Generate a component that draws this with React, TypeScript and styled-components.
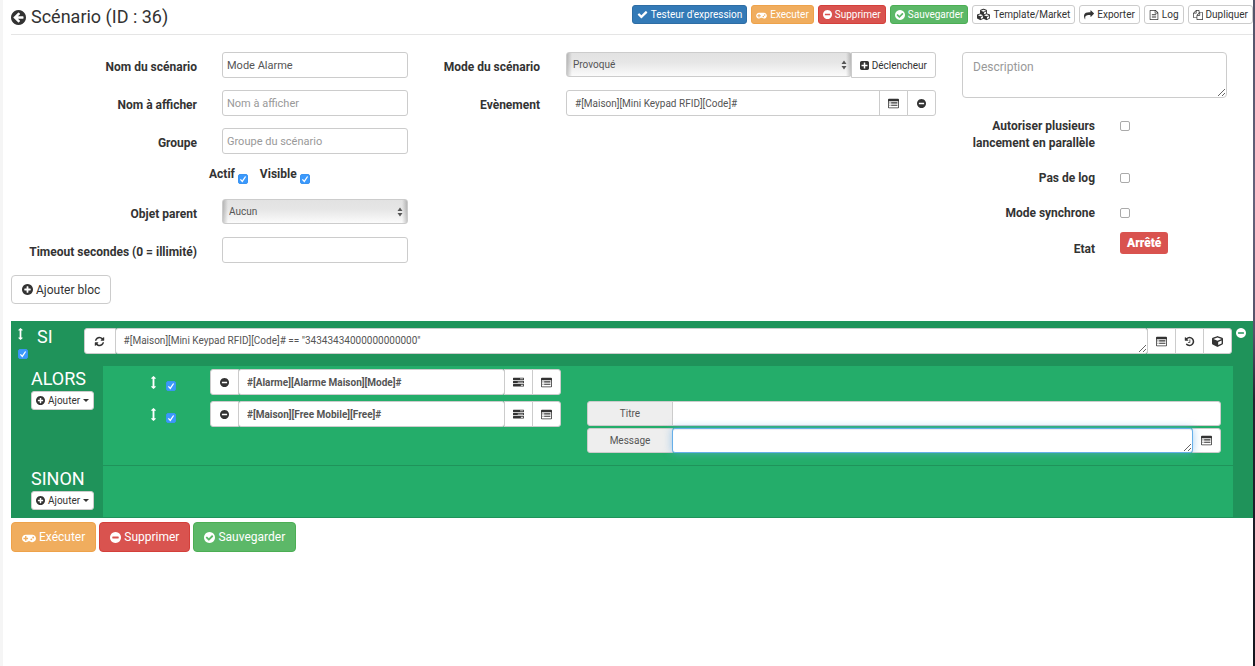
import React from "react";
import styled, { createGlobalStyle, css } from "styled-components";
import { FaCube, FaCubes } from "react-icons/fa";

const GlobalStyle = createGlobalStyle`
  *, *::before, *::after { box-sizing: border-box; }
  body {
    margin: 0;
    background: #fff;
    color: #333;
    font-family: Roboto, "Liberation Sans", sans-serif;
    font-size: 12px;
    line-height: 17px;
  }
  button, input, select, textarea { font-family: inherit; margin: 0; }
`;

/* ---------- icons ---------- */

const DISC =
  "M1664 896q0 209-103 385.5t-279.5 279.5-385.5 103-385.5-103-279.5-279.5-103-385.5 103-385.5 279.5-279.5 385.5-103 385.5 103 279.5 279.5 103 385.5z";

const PATHS = {
  back:
    "M1408 960v-128q0-26-19-45t-45-19h-502l189-189q19-19 19-45t-19-45l-91-91q-18-18-45-18t-45 18l-362 362-91 91q-18 18-18 45t18 45l91 91 362 362q18 18 45 18t45-18l91-91q18-18 18-45t-18-45l-189-189h502q26 0 45-19t19-45z" + DISC,
  check:
    "M1671 566q0 40-28 68l-724 724-136 136q-28 28-68 28t-68-28l-136-136-362-362q-28-28-28-68t28-68l136-136q28-28 68-28t68 28l294 295 656-657q28-28 68-28t68 28l136 136q28 28 28 68z",
  minus:
    "M1344 960v-128q0-26-19-45t-45-19h-768q-26 0-45 19t-19 45v128q0 26 19 45t45 19h768q26 0 45-19t19-45z" + DISC,
  plus:
    "M1344 960v-128q0-26-19-45t-45-19h-256v-256q0-26-19-45t-45-19h-128q-26 0-45 19t-19 45v256h-256q-26 0-45 19t-19 45v128q0 26 19 45t45 19h256v256q0 26 19 45t45 19h128q26 0 45-19t19-45v-256h256q26 0 45-19t19-45z" + DISC,
  ok:
    "M1412 734q0-28-18-46l-91-90q-19-19-45-19t-45 19l-408 407-226-226q-19-19-45-19t-45 19l-91 90q-18 18-18 46 0 27 18 45l362 362q19 19 45 19 27 0 46-19l543-543q18-18 18-45z" + DISC,
  plusSquare:
    "M1408 960v-128q0-26-19-45t-45-19h-320v-320q0-26-19-45t-45-19h-128q-26 0-45 19t-19 45v320h-320q-26 0-45 19t-19 45v128q0 26 19 45t45 19h320v320q0 26 19 45t45 19h128q26 0 45-19t19-45v-320h320q26 0 45-19t19-45zm256-544v960q0 119-84.5 203.5t-203.5 84.5h-960q-119 0-203.5-84.5t-84.5-203.5v-960q0-119 84.5-203.5t203.5-84.5h960q119 0 203.5 84.5t84.5 203.5z",
  gamepad:
    "M832 1088v-128q0-14-9-23t-23-9h-192v-192q0-14-9-23t-23-9h-128q-14 0-23 9t-9 23v192h-192q-14 0-23 9t-9 23v128q0 14 9 23t23 9h192v192q0 14 9 23t23 9h128q14 0 23-9t9-23v-192h192q14 0 23-9t9-23zm576 64q0-53-37.5-90.5t-90.5-37.5-90.5 37.5-37.5 90.5 37.5 90.5 90.5 37.5 90.5-37.5 37.5-90.5zm256-256q0-53-37.5-90.5t-90.5-37.5-90.5 37.5-37.5 90.5 37.5 90.5 90.5 37.5 90.5-37.5 37.5-90.5zm256 128q0 212-150 362t-362 150q-192 0-338-128h-220q-146 128-338 128-212 0-362-150t-150-362 150-362 362-150h896q212 0 362 150t150 362z",
  share:
    "M1792 640q0 26-19 45l-512 512q-19 19-45 19t-45-19-19-45v-256h-224q-98 0-175.5 6t-154 21.5-133 42.5-105.5 69.5-80 101-48.5 138.5-17.5 181q0 55 5 123 0 6 2.5 23.5t2.5 26.5q0 15-8.5 25t-23.5 10q-16 0-28-17-7-9-13-22t-13.5-30-10.5-24q-127-285-127-451 0-199 53-333 162-403 875-403h224v-256q0-26 19-45t45-19 45 19l512 512q19 19 19 45z",
  refresh:
    "M1639 1056q0 5-1 7-64 268-268 434.5t-478 166.5q-146 0-282.5-55t-243.5-157l-129 129q-19 19-45 19t-45-19-19-45v-448q0-26 19-45t45-19h448q26 0 45 19t19 45-19 45l-137 137q71 66 161 102t187 36q134 0 250-65t186-179q11-17 53-117 8-23 30-23h192q13 0 22.5 9.5t9.5 22.5zm25-800v448q0 26-19 45t-45 19h-448q-26 0-45-19t-19-45 19-45l138-138q-148-137-349-137-134 0-250 65t-186 179q-11 17-53 117-8 23-30 23h-199q-13 0-22.5-9.5t-9.5-22.5v-7q65-268 270-434.5t480-166.5q146 0 284 55.5t245 156.5l130-129q19-19 45-19t45 19 19 45z",
  history:
    "M1664 896q0 156-61 298t-164 245-245 164-298 61q-172 0-327-72.5t-264-204.5q-7-10-6.5-22.5t8.5-20.5l137-138q10-9 25-9 16 2 23 12 73 95 179 147t225 52q104 0 198.5-40.5t163.5-109.5 109.5-163.5 40.5-198.5-40.5-198.5-109.5-163.5-163.5-109.5-198.5-40.5q-98 0-188 35.5t-160 101.5l137 138q31 30 14 69-17 40-59 40h-448q-26 0-45-19t-19-45v-448q0-42 40-59 39-17 69 14l130 129q107-101 244.5-156.5t284.5-55.5q156 0 298 61t245 164 164 245 61 298zm-640-288v448q0 14-9 23t-23 9h-320q-14 0-23-9t-9-23v-64q0-14 9-23t23-9h224v-352q0-14 9-23t23-9h64q14 0 23 9t9 23z",
  move:
    "M1088 320q0 26-19 45t-45 19h-128v1024h128q26 0 45 19t19 45-19 45l-256 256q-19 19-45 19t-45-19l-256-256q-19-19-19-45t19-45 45-19h128v-1024h-128q-26 0-45-19t-19-45 19-45l256-256q19-19 45-19t45 19l256 256q19 19 19 45z",
  listAlt:
    "M160 128h1472q160 0 160 160v1216q0 160-160 160h-1472q-160 0-160-160v-1216q0-160 160-160zM128 512v992q0 32 32 32h1472q32 0 32-32v-992zM256 640h128v128h-128zM512 640h1024v128h-1024zM256 896h128v128h-128zM512 896h1024v128h-1024zM256 1152h128v128h-128zM512 1152h1024v128h-1024z",
  tasks:
    "M64 128h1664q64 0 64 64v256q0 64-64 64h-1664q-64 0-64-64v-256q0-64 64-64zM1152 256v128h512v-128zM64 640h1664q64 0 64 64v256q0 64-64 64h-1664q-64 0-64-64v-256q0-64 64-64zM768 768v128h896v-128zM64 1152h1664q64 0 64 64v256q0 64-64 64h-1664q-64 0-64-64v-256q0-64 64-64zM1280 1280v128h384v-128z",
  file:
    "M1596 380q28 28 48 76t20 88v1152q0 40-28 68t-68 28h-1344q-40 0-68-28t-28-68v-1600q0-40 28-68t68-28h896q40 0 88 20t76 48zm-444-244v376h376q-10-29-22-41l-313-313q-12-12-41-22zm384 1528v-1024h-416q-40 0-68-28t-28-68v-416h-768v1536h1280zM512 768h768v128h-768zM512 1024h768v128h-768zM512 1280h768v128h-768z",
  files:
    "M1696 384q40 0 68 28t28 68v1216q0 40-28 68t-68 28h-960q-40 0-68-28t-28-68v-288h-544q-40 0-68-28t-28-68v-672q0-40 20-88t48-76l408-408q28-28 76-48t88-20h416q40 0 68 28t28 68v328q68-40 128-40h416zm-544 213l-299 299h299v-299zm-640-384l-299 299h299v-299zm196 647l316-316v-416h-384v416q0 40-28 68t-68 28h-416v640h512v-256q0-40 20-88t48-76zm956 804v-1152h-384v416q0 40-28 68t-68 28h-416v640h896z",
};

type IconName = keyof typeof PATHS;

const TIGHT = "128 128 1536 1536";
const VIEW: Partial<Record<IconName, string>> = {
  back: TIGHT,
  minus: TIGHT,
  plus: TIGHT,
  ok: TIGHT,
  plusSquare: TIGHT,
  gamepad: "0 0 1920 1792",
  move: "448 0 640 1792",
};

const Glyph = styled.svg`
  flex: none;
  display: block;
  fill: currentColor;
  fill-rule: evenodd;
`;

function Icon({ name, size = 11 }: { name: IconName; size?: number }) {
  const width = name === "gamepad" ? size + 1 : name === "move" ? 5 : size;
  return (
    <Glyph width={width} height={size} viewBox={VIEW[name] ?? "0 0 1792 1792"} aria-hidden="true">
      <path d={PATHS[name]} />
    </Glyph>
  );
}

/* ---------- controls ---------- */

type Tone = "plain" | "primary" | "warning" | "danger" | "success";

const TONES: Record<Tone, [string, string, string]> = {
  plain: ["#fff", "#ccc", "#333"],
  primary: ["#337ab7", "#2e6da4", "#fff"],
  warning: ["#f0ad5e", "#eea24a", "#fff"],
  danger: ["#d9534f", "#d43f3a", "#fff"],
  success: ["#5cb868", "#4cae54", "#fff"],
};

const Button = styled.button<{ $tone?: Tone; $size?: "xs" | "md" }>`
  display: inline-flex;
  align-items: center;
  flex: none;
  gap: 3px;
  white-space: nowrap;
  border: 1px solid ${(p) => TONES[p.$tone ?? "plain"][1]};
  background: ${(p) => TONES[p.$tone ?? "plain"][0]};
  color: ${(p) => TONES[p.$tone ?? "plain"][2]};
  cursor: pointer;
  ${(p) =>
    p.$size === "md"
      ? css`
          height: 30px;
          padding: 0 10px;
          border-radius: 4px;
          font-size: 12px;
        `
      : css`
          height: 19px;
          padding: 0 4px;
          border-radius: 3px;
          font-size: 10px;
        `}
`;

const field = css`
  border: 1px solid #ccc;
  border-radius: 3px;
  background: #fff;
  color: #555;
  font-size: 11px;
  line-height: 15px;
  min-width: 0;
  outline: none;
  &::placeholder { color: #999; opacity: 1; }
`;

const TextInput = styled.input`
  ${field}
  width: 100%;
  height: 26px;
  padding: 0 4px;
`;

const DescriptionArea = styled.textarea`
  ${field}
  display: block;
  width: 100%;
  height: 46px;
  padding: 6px 10px;
  font-size: 12px;
  line-height: 17px;
  border-radius: 4px;
`;

const Tick = styled.input.attrs({ type: "checkbox" })`
  appearance: none;
  flex: none;
  display: block;
  width: 10px;
  height: 10px;
  border: 1px solid #aaa;
  border-radius: 2px;
  background: #fff;
  &:checked {
    border-color: #3b94f2;
    background: #3b99fc;
  }
`;

const TickFrame = styled.span`
  position: relative;
  display: block;
  flex: none;
  width: 10px;
  height: 10px;
`;

const TickMark = styled.svg`
  position: absolute;
  inset: 0;
  pointer-events: none;
`;

function CheckBox({ id, on = false, label }: { id?: string; on?: boolean; label?: string }) {
  return (
    <TickFrame>
      <Tick id={id} defaultChecked={on} aria-label={label} />
      {on && (
        <TickMark width="10" height="10" viewBox="0 0 10 10" aria-hidden="true">
          <path d="M2.4 5.4 L4.3 7.4 L7.6 2.5" fill="none" stroke="#fff" strokeWidth="1.3" />
        </TickMark>
      )}
    </TickFrame>
  );
}

const SelectFrame = styled.div`
  position: relative;
  flex: 1;
  min-width: 0;
  height: 26px;
`;

const NativeSelect = styled.select`
  ${field}
  appearance: none;
  display: block;
  width: 100%;
  height: 25px;
  padding: 0 6px;
  background:
    linear-gradient(90deg, rgba(0, 0, 0, 0.2), transparent 5px, transparent calc(100% - 5px), rgba(0, 0, 0, 0.2)),
    linear-gradient(#e2e2e2, #e6e6e6 40%, #fbfbfb);
  font-size: 10px;
`;

const SelectArrows = styled.svg`
  position: absolute;
  right: 5px;
  top: 8px;
  fill: #555;
  pointer-events: none;
`;

function Select({ id, value }: { id: string; value: string }) {
  return (
    <SelectFrame>
      <NativeSelect id={id} defaultValue={value}>
        <option>{value}</option>
      </NativeSelect>
      <SelectArrows width="6" height="10" viewBox="0 0 6 10" aria-hidden="true">
        <path d="M3 0.5L5.5 4h-5zM3 9.5L0.5 6h5z" />
      </SelectArrows>
    </SelectFrame>
  );
}

const Group = styled.div`
  display: flex;
  flex: 1;
  min-width: 0;
  & > * { border-radius: 0; }
  & > * + * { margin-left: -1px; }
  & > :first-child { border-radius: 3px 0 0 3px; }
  & > :last-child { border-radius: 0 3px 3px 0; }
`;

const GroupInput = styled.input<{ $bold?: boolean }>`
  ${field}
  flex: 1;
  height: 26px;
  padding: 0 8px;
  font-size: 10px;
  font-weight: ${(p) => (p.$bold ? 700 : 400)};
`;

const GroupArea = styled.textarea<{ $active?: boolean }>`
  ${field}
  flex: 1;
  height: 26px;
  padding: 4px 8px;
  font-size: 10px;
  overflow: hidden;
  ${(p) =>
    p.$active &&
    css`
      position: relative;
      border-color: #66afe9;
      box-shadow: inset 0 1px 1px rgba(0, 0, 0, 0.075), 0 0 8px rgba(102, 175, 233, 0.6);
    `}
`;

const IconButton = styled.button<{ $wide?: boolean }>`
  display: flex;
  align-items: center;
  justify-content: center;
  flex: none;
  width: ${(p) => (p.$wide ? 32 : 29)}px;
  height: 26px;
  padding: 0;
  border: 1px solid #ccc;
  background: #fff;
  color: #333;
  cursor: pointer;
`;

const TriggerButton = styled(Button)`
  height: 26px;
  padding: 0 8px;
`;

const Addon = styled.label`
  display: flex;
  align-items: center;
  justify-content: center;
  flex: none;
  width: 86px;
  border: 1px solid #ccc;
  background: #eee;
  color: #555;
  font-size: 10px;
`;

/* ---------- page ---------- */

const Page = styled.div`
  min-height: 100vh;
  padding: 0 2px 0 8px;
  border-left: 3px solid #f5f5f5;
  background: linear-gradient(#53546a, #65637c 30%, #55536a 50%, #22242f 60%, #14161f) right / 2px 100% no-repeat;
`;

const Header = styled.header`
  display: flex;
  align-items: center;
  justify-content: space-between;
  height: 35px;
  border-bottom: 1px solid #e5e5e5;
`;

const Title = styled.h1`
  display: flex;
  align-items: center;
  gap: 5px;
  margin: 0;
  font-size: 18px;
  line-height: 24px;
  font-weight: 400;
  white-space: nowrap;
`;

const BackLink = styled.a`
  color: inherit;
`;

const Toolbar = styled.div`
  display: flex;
  gap: 4px;
  padding-bottom: 5px;
`;

const FormGrid = styled.form`
  display: grid;
  grid-template-columns: minmax(0, 397fr) minmax(0, 528fr) minmax(0, 317fr);
  padding-top: 17px;
`;

const Column = styled.div`
  display: flex;
  flex-direction: column;
  gap: 12px;
`;

const Row = styled.div<{ $label: number; $gap: number }>`
  display: grid;
  grid-template-columns: ${(p) => p.$label}px minmax(0, 1fr);
  column-gap: ${(p) => p.$gap}px;
  align-items: center;
`;

const Label = styled.label`
  font-weight: 700;
  text-align: right;
  padding-top: 4px;
`;

const Toggles = styled.div`
  display: flex;
  gap: 12px;
  height: 21px;
  padding-left: 198px;
`;

const Toggle = styled.div`
  display: flex;
  gap: 3px;
  font-weight: 700;
  & > span { margin-top: 8px; }
`;

const SideColumn = styled.div`
  display: flex;
  flex-direction: column;
  padding: 0 26px;
`;

const SideList = styled.div`
  display: flex;
  flex-direction: column;
  gap: 18px;
  padding: 20px 0 10px;
`;

const SideRow = styled.div`
  display: grid;
  grid-template-columns: 133px minmax(0, 1fr);
  column-gap: 25px;
  align-items: start;
  font-weight: 700;
  text-align: right;
  & > span:last-child { margin-top: 3px; }
`;

const StateRow = styled(SideRow)`
  align-items: end;
`;

const StateBadge = styled.strong`
  justify-self: start;
  padding: 3px 7px 2px;
  margin-bottom: 4px;
  border-radius: 3px;
  background: #d9534f;
  color: #fff;
`;

const AddBlock = styled.div`
  padding: 12px 0 17px;
`;

const AddBlockButton = styled(Button)`
  height: 29px;
`;

const Block = styled.section`
  background: #1f935a;
  color: #fff;
  padding-bottom: 1px;
`;

const Condition = styled.div`
  display: flex;
  align-items: flex-start;
  height: 44px;
  padding: 7px 7px 0 7px;
`;

const Handle = styled.div`
  display: flex;
  flex-direction: column;
  gap: 9px;
  width: 19px;
`;

const Keyword = styled.h2`
  margin: 0;
  font-size: 18px;
  line-height: 18px;
  font-weight: 400;
`;

const ConditionFields = styled.div`
  display: flex;
  flex: 1;
  min-width: 0;
  padding-left: 31px;
  gap: 4px;
`;

const RemoveButton = styled.button`
  align-self: flex-start;
  padding: 0;
  border: 0;
  background: none;
  color: #fff;
  cursor: pointer;
`;

const Branch = styled.div<{ $height: number }>`
  display: grid;
  grid-template-columns: 92px minmax(0, 1fr);
  min-height: ${(p) => p.$height}px;
  padding-right: 20px;
`;

const BranchHead = styled.div`
  display: flex;
  flex-direction: column;
  align-items: flex-start;
  gap: 3px;
  padding: 5px 0 0 20px;
`;

const BranchBody = styled.div`
  display: flex;
  flex-direction: column;
  gap: 6px;
  margin-top: 1px;
  padding: 3px 12px 0 48px;
  background: #24ad6a;
`;

const ActionRow = styled.div`
  display: grid;
  grid-template-columns: 59px minmax(0, 351fr) minmax(0, 660fr);
  align-items: start;
`;

const ActionHandle = styled.div`
  display: flex;
  gap: 10px;
  padding-top: 7px;
  & > span { margin-top: 5px; }
`;

const Options = styled.div`
  display: flex;
  flex-direction: column;
  gap: 2px;
  padding-left: 26px;
  & > ${Group} > * { height: 25px; }
`;

const Caret = styled.span`
  border: 3px solid transparent;
  border-top-color: currentColor;
  border-bottom: 0;
`;

const Footer = styled.footer`
  display: flex;
  gap: 3px;
  padding-top: 4px;
`;

function AddMenuButton() {
  return (
    <Button type="button">
      <Icon name="plus" size={9} />
      Ajouter
      <Caret />
    </Button>
  );
}

function Action({ expression, children }: { expression: string; children?: React.ReactNode }) {
  return (
    <ActionRow>
      <ActionHandle>
        <Icon name="move" size={13} />
        <CheckBox on label="Activer l'action" />
      </ActionHandle>
      <Group>
        <IconButton type="button" aria-label="Supprimer l'action"><Icon name="minus" size={9} /></IconButton>
        <GroupInput $bold aria-label="Action" defaultValue={expression} />
        <IconButton type="button" aria-label="Choisir un mot-clé"><Icon name="tasks" /></IconButton>
        <IconButton type="button" aria-label="Choisir une commande"><Icon name="listAlt" /></IconButton>
      </Group>
      {children}
    </ActionRow>
  );
}

export default function App() {
  return (
    <>
      <GlobalStyle />
      <Page>
        <Header>
          <Title>
            <BackLink href="#" aria-label="Retour"><Icon name="back" size={15} /></BackLink>
            Scénario (ID : 36)
          </Title>
          <Toolbar>
            <Button type="button" $tone="primary"><Icon name="check" />Testeur d'expression</Button>
            <Button type="button" $tone="warning"><Icon name="gamepad" size={10} />Executer</Button>
            <Button type="button" $tone="danger"><Icon name="minus" size={9} />Supprimer</Button>
            <Button type="button" $tone="success"><Icon name="ok" size={10} />Sauvegarder</Button>
            <Button type="button"><FaCubes size={13} />Template/Market</Button>
            <Button type="button"><Icon name="share" size={10} />Exporter</Button>
            <Button type="button"><Icon name="file" size={10} />Log</Button>
            <Button type="button"><Icon name="files" size={10} />Dupliquer</Button>
          </Toolbar>
        </Header>

        <FormGrid onSubmit={(e) => e.preventDefault()}>
          <Column>
            <Row $label={186} $gap={25}>
              <Label htmlFor="name">Nom du scénario</Label>
              <TextInput id="name" defaultValue="Mode Alarme" />
            </Row>
            <Row $label={186} $gap={25}>
              <Label htmlFor="display">Nom à afficher</Label>
              <TextInput id="display" placeholder="Nom à afficher" />
            </Row>
            <Row $label={186} $gap={25}>
              <Label htmlFor="group">Groupe</Label>
              <TextInput id="group" placeholder="Groupe du scénario" />
            </Row>
            <Toggles>
              <Toggle><label htmlFor="active">Actif</label><CheckBox id="active" on /></Toggle>
              <Toggle><label htmlFor="visible">Visible</label><CheckBox id="visible" on /></Toggle>
            </Toggles>
            <Row $label={186} $gap={25}>
              <Label htmlFor="parent">Objet parent</Label>
              <Select id="parent" value="Aucun" />
            </Row>
            <Row $label={186} $gap={25}>
              <Label htmlFor="timeout">Timeout secondes (0 = illimité)</Label>
              <TextInput id="timeout" />
            </Row>
          </Column>

          <Column>
            <Row $label={132} $gap={26}>
              <Label htmlFor="mode">Mode du scénario</Label>
              <Group>
                <Select id="mode" value="Provoqué" />
                <TriggerButton type="button"><Icon name="plusSquare" size={9} />Déclencheur</TriggerButton>
              </Group>
            </Row>
            <Row $label={132} $gap={26}>
              <Label htmlFor="event">Evènement</Label>
              <Group>
                <GroupInput id="event" defaultValue="#[Maison][Mini Keypad RFID][Code]#" />
                <IconButton type="button" aria-label="Choisir une commande"><Icon name="listAlt" /></IconButton>
                <IconButton type="button" aria-label="Supprimer le déclencheur"><Icon name="minus" size={9} /></IconButton>
              </Group>
            </Row>
          </Column>

          <SideColumn>
            <DescriptionArea aria-label="Description" placeholder="Description" />
            <SideList>
              <SideRow><label htmlFor="parallel">Autoriser plusieurs lancement en parallèle</label><CheckBox id="parallel" /></SideRow>
              <SideRow><label htmlFor="nolog">Pas de log</label><CheckBox id="nolog" /></SideRow>
              <SideRow><label htmlFor="sync">Mode synchrone</label><CheckBox id="sync" /></SideRow>
            </SideList>
            <StateRow><span>Etat</span><StateBadge>Arrêté</StateBadge></StateRow>
          </SideColumn>
        </FormGrid>

        <AddBlock>
          <AddBlockButton type="button" $size="md"><Icon name="plus" />Ajouter bloc</AddBlockButton>
        </AddBlock>

        <Block>
          <Condition>
            <Handle>
              <Icon name="move" size={12} />
              <CheckBox on label="Activer le bloc" />
            </Handle>
            <Keyword>SI</Keyword>
            <ConditionFields>
              <Group>
                <IconButton type="button" $wide aria-label="Réévaluer"><Icon name="refresh" /></IconButton>
                <GroupArea aria-label="Condition" defaultValue={'#[Maison][Mini Keypad RFID][Code]# == "34343434000000000000"'} />
                <IconButton type="button" aria-label="Choisir une commande"><Icon name="listAlt" /></IconButton>
                <IconButton type="button" aria-label="Choisir un scénario"><Icon name="history" /></IconButton>
                <IconButton type="button" aria-label="Choisir un équipement"><FaCube size={11} /></IconButton>
              </Group>
              <RemoveButton type="button" aria-label="Supprimer le bloc"><Icon name="minus" size={10} /></RemoveButton>
            </ConditionFields>
          </Condition>
          <Branch $height={100}>
            <BranchHead>
              <Keyword>ALORS</Keyword>
              <AddMenuButton />
            </BranchHead>
            <BranchBody>
              <Action expression="#[Alarme][Alarme Maison][Mode]#" />
              <Action expression="#[Maison][Free Mobile][Free]#">
                <Options>
                  <Group>
                    <Addon htmlFor="title">Titre</Addon>
                    <GroupInput id="title" />
                  </Group>
                  <Group>
                    <Addon htmlFor="message">Message</Addon>
                    <GroupArea id="message" $active />
                    <IconButton type="button" aria-label="Choisir une commande"><Icon name="listAlt" /></IconButton>
                  </Group>
                </Options>
              </Action>
            </BranchBody>
          </Branch>
          <Branch $height={52}>
            <BranchHead>
              <Keyword>SINON</Keyword>
              <AddMenuButton />
            </BranchHead>
            <BranchBody />
          </Branch>
        </Block>

        <Footer>
          <Button type="button" $size="md" $tone="warning"><Icon name="gamepad" size={13} />Exécuter</Button>
          <Button type="button" $size="md" $tone="danger"><Icon name="minus" />Supprimer</Button>
          <Button type="button" $size="md" $tone="success"><Icon name="ok" />Sauvegarder</Button>
        </Footer>
      </Page>
    </>
  );
}
